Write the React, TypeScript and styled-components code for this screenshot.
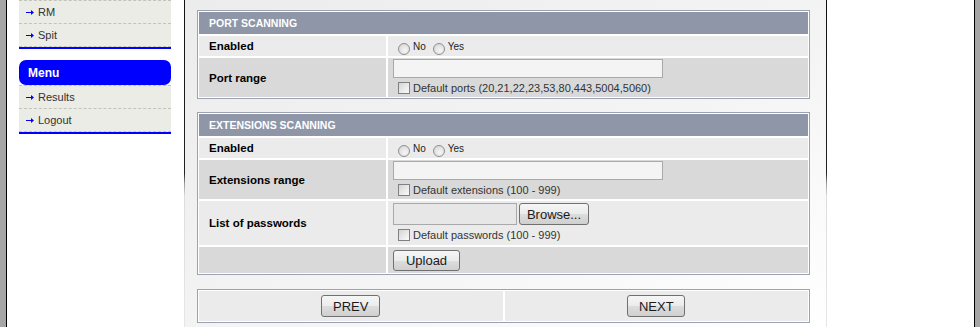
import styled, { createGlobalStyle } from "styled-components";

const GlobalStyle = createGlobalStyle`
  html, body {
    margin: 0;
    padding: 0;
    height: 100%;
    background-color: #a6a6a6;
    font-family: "Liberation Sans", Arial, sans-serif;
  }
  * {
    box-sizing: border-box;
  }
`;

const ArrowIcon = (): JSX.Element => (
  <svg width="8" height="5" viewBox="0 0 8 5">
    <rect x="0" y="2" width="5" height="1" fill="#0000ff" />
    <path d="M5 0 L8 2.5 L5 5 Z" fill="#0000ff" />
  </svg>
);

const App = (): JSX.Element => {
  return (
    <>
      <GlobalStyle />
      <Page>
        <Frame>
          <SideColumn>
            <SideBlock>
              <SideItem>
                <ArrowIcon />
                <span>RM</span>
              </SideItem>
              <SideItem>
                <ArrowIcon />
                <span>Spit</span>
              </SideItem>
            </SideBlock>
            <SideHeader>Menu</SideHeader>
            <SideBlock>
              <SideItem>
                <ArrowIcon />
                <span>Results</span>
              </SideItem>
              <SideItem>
                <ArrowIcon />
                <span>Logout</span>
              </SideItem>
            </SideBlock>
          </SideColumn>
          <Rule />
          <Content>
            <Panel>
              <PanelHeader>PORT SCANNING</PanelHeader>
              <Row $dark={false}>
                <LabelCell>Enabled</LabelCell>
                <ValueCell>
                  <RadioGroup>
                    <RadioLabel>
                      <Radio type="radio" name="port" />
                      <span>No</span>
                    </RadioLabel>
                    <RadioLabel>
                      <Radio type="radio" name="port" />
                      <span>Yes</span>
                    </RadioLabel>
                  </RadioGroup>
                </ValueCell>
              </Row>
              <Row $dark={true} $height={39}>
                <LabelCell>Port range</LabelCell>
                <ValueCell $stack>
                  <TextInput type="text" />
                  <CheckRow>
                    <Check type="checkbox" />
                    <span>Default ports (20,21,22,23,53,80,443,5004,5060)</span>
                  </CheckRow>
                </ValueCell>
              </Row>
            </Panel>

            <Panel>
              <PanelHeader>EXTENSIONS SCANNING</PanelHeader>
              <Row $dark={false}>
                <LabelCell>Enabled</LabelCell>
                <ValueCell>
                  <RadioGroup>
                    <RadioLabel>
                      <Radio type="radio" name="ext" />
                      <span>No</span>
                    </RadioLabel>
                    <RadioLabel>
                      <Radio type="radio" name="ext" />
                      <span>Yes</span>
                    </RadioLabel>
                  </RadioGroup>
                </ValueCell>
              </Row>
              <Row $dark={true} $height={39}>
                <LabelCell>Extensions range</LabelCell>
                <ValueCell $stack>
                  <TextInput type="text" />
                  <CheckRow>
                    <Check type="checkbox" />
                    <span>Default extensions (100 - 999)</span>
                  </CheckRow>
                </ValueCell>
              </Row>
              <Row $dark={false} $height={44}>
                <LabelCell>List of passwords</LabelCell>
                <ValueCell $stack>
                  <FileRow>
                    <FileBox type="text" readOnly />
                    <Button $w={70} $h={22}>Browse...</Button>
                  </FileRow>
                  <CheckRow>
                    <Check type="checkbox" />
                    <span>Default passwords (100 - 999)</span>
                  </CheckRow>
                </ValueCell>
              </Row>
              <Row $dark={true} $height={26}>
                <LabelCell />
                <ValueCell>
                  <Button $w={67} $h={21}>Upload</Button>
                </ValueCell>
              </Row>
            </Panel>

            <NavPanel>
              <NavCell>
                <Button $w={59} $h={22}>PREV</Button>
              </NavCell>
              <NavCell>
                <Button $w={58} $h={22}>NEXT</Button>
              </NavCell>
            </NavPanel>
          </Content>
          <Rule />
          <RightColumn />
        </Frame>
      </Page>
    </>
  );
};

export default App;

const Page = styled.div`
  height: 100vh;
  padding-left: 6px;
  display: flex;
  overflow: hidden;
`;

const Frame = styled.div`
  width: 969px;
  height: 100%;
  display: flex;
  background-color: #ffffff;
  border-left: 1px solid #000000;
  border-right: 1px solid #000000;
`;

const SideColumn = styled.div`
  width: 177px;
  padding-left: 12px;
  display: flex;
  flex-direction: column;
`;

const SideBlock = styled.div`
  width: 152px;
  background-color: #ebece5;
  border-top: 1px dashed #c2c3ba;
  border-bottom: 2px solid #0000ff;
  margin-bottom: 11px;
`;

const SideItem = styled.div`
  height: 23px;
  display: flex;
  align-items: center;
  gap: 4px;
  padding-left: 7px;
  font-size: 11px;
  color: #333333;
  border-bottom: 1px dashed #c2c3ba;

  svg {
    margin-top: 1px;
  }
`;

const SideHeader = styled.div`
  width: 152px;
  height: 25px;
  background-color: #0000ff;
  border-radius: 7px;
  color: #ffffff;
  font-size: 12px;
  font-weight: bold;
  display: flex;
  align-items: center;
  padding-left: 9px;
`;

const Rule = styled.div`
  width: 1px;
  flex-shrink: 0;
  background: linear-gradient(
    to bottom,
    #111111 0%,
    #222222 53%,
    #999999 56%,
    #dddddd 60%,
    #e6e6e6 100%
  );
`;

const Content = styled.div`
  width: 641px;
  flex-shrink: 0;
  padding: 10px 0 0 12px;
  background: linear-gradient(to bottom right, #ececec 0%, #f4f4f4 55%, #ffffff 100%);
  display: flex;
  flex-direction: column;
  gap: 13px;
`;

const RightColumn = styled.div`
  flex: 1;
`;

const Panel = styled.div`
  width: 613px;
  border: 1px solid #9ca2b0;
  background-color: #ffffff;
  padding: 1px;
  display: flex;
  flex-direction: column;
  gap: 2px;
`;

const PanelHeader = styled.div`
  height: 22px;
  background-color: #8e96a8;
  color: #ffffff;
  font-size: 10.5px;
  font-weight: bold;
  display: flex;
  align-items: center;
  padding-left: 10px;
`;

const Row = styled.div<{ $dark: boolean; $height?: number }>`
  height: ${(p) => p.$height ?? 20}px;
  display: grid;
  grid-template-columns: 187px 1fr;
  gap: 2px;

  & > div {
    background-color: ${(p) => (p.$dark ? "#d9d9d9" : "#ebebeb")};
  }
`;

const LabelCell = styled.div`
  display: flex;
  align-items: center;
  padding-left: 10px;
  font-size: 11.5px;
  font-weight: bold;
  color: #000000;
`;

const ValueCell = styled.div<{ $stack?: boolean }>`
  display: flex;
  flex-direction: ${(p) => (p.$stack ? "column" : "row")};
  align-items: ${(p) => (p.$stack ? "flex-start" : "center")};
  padding: ${(p) => (p.$stack ? "1px 5px 0 5px" : "0 5px")};
  font-size: 11px;
  color: #333333;
`;

const RadioGroup = styled.div`
  display: flex;
  align-items: center;
  gap: 7px;
  padding-left: 5px;
`;

const RadioLabel = styled.label`
  display: inline-flex;
  align-items: center;
  gap: 3px;
  font-size: 10px;
  color: #222222;
`;

const Radio = styled.input`
  appearance: none;
  width: 12px;
  height: 12px;
  margin: 5px 0 0 0;
  border: 1px solid #8f8f8f;
  border-radius: 50%;
  background: radial-gradient(circle at 60% 65%, #f6f6f6 0%, #e2e2e2 55%, #cfcfcf 100%);
`;

const TextInput = styled.input`
  width: 270px;
  height: 19px;
  margin: 0;
  border: 1px solid #a9a9a9;
  background-color: #f4f4f4;
  padding: 0 3px;
`;

const CheckRow = styled.label`
  display: flex;
  align-items: center;
  gap: 3px;
  margin-top: 4px;
  padding-left: 5px;
  font-size: 11px;
  color: #333333;
  line-height: 12px;
`;

const Check = styled.input`
  appearance: none;
  width: 12px;
  height: 12px;
  margin: 0;
  border: 1px solid #808080;
  background: linear-gradient(135deg, #d4d4d4 0%, #e8e8e8 50%, #fafafa 100%);
`;

const FileRow = styled.div`
  display: flex;
  align-items: center;
  gap: 2px;
  margin-top: 1px;
`;

const FileBox = styled.input`
  width: 124px;
  height: 22px;
  margin: 0;
  border: 1px solid #a9a9a9;
  background-color: #e7e7e7;
`;

const Button = styled.button<{ $w: number; $h: number }>`
  width: ${(p) => p.$w}px;
  height: ${(p) => p.$h}px;
  margin: 0;
  padding: 0;
  border: 1px solid #707070;
  border-radius: 3px;
  background: linear-gradient(to bottom, #f6f6f6 0%, #ebebeb 50%, #dddddd 51%, #cfcfcf 100%);
  font-family: "Liberation Sans", Arial, sans-serif;
  font-size: 13px;
  color: #1a1a1a;
  display: flex;
  align-items: center;
  justify-content: center;
`;

const NavPanel = styled.div`
  width: 613px;
  height: 34px;
  margin-top: 1px;
  border: 1px solid #9ca2b0;
  background-color: #ffffff;
  padding: 1px;
  display: grid;
  grid-template-columns: 1fr 1fr;
  gap: 2px;
`;

const NavCell = styled.div`
  background-color: #ebebeb;
  display: flex;
  align-items: center;
  justify-content: center;
`;
